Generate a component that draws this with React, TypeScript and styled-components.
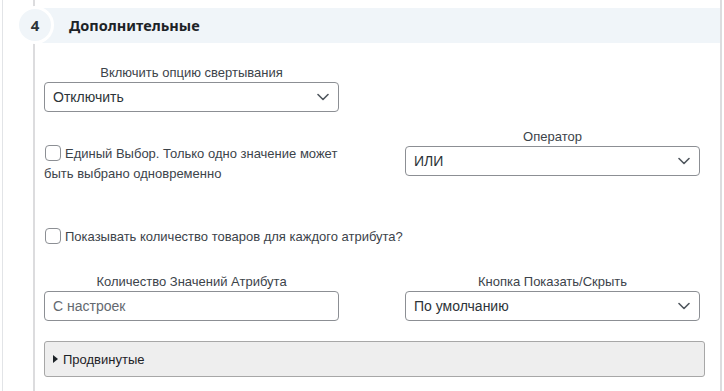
import React from "react";
import styled, { createGlobalStyle } from "styled-components";

const Global = createGlobalStyle`
  html, body { margin: 0; padding: 0; background: #fff; }
  body { font-family: "Liberation Sans", Arial, sans-serif; color: #2c3338; }
  * { box-sizing: border-box; }
`;

const Frame = styled.div`
  width: 724px;
  height: 391px;
  overflow: hidden;
  padding-left: 2px;
  background: #fff;
`;

const Panel = styled.div`
  width: 720px;
  height: 391px;
  border-left: 1px solid #e2e4e7;
  border-right: 2px solid #dcdcde;
`;

const Section = styled.div`
  margin-left: 30px;
  height: 100%;
  border-left: 2px solid #dcdcde;
  padding-top: 6px;
`;

const HeaderRow = styled.div`
  display: flex;
  align-items: center;
  margin-left: -19px;
  height: 38px;
`;

const StepCircle = styled.div`
  position: relative;
  z-index: 1;
  width: 38px;
  height: 38px;
  flex: none;
  border-radius: 50%;
  background: #f0f5f9;
  border: 3px solid #fff;
  display: flex;
  align-items: center;
  justify-content: center;
  font-family: "Noto Sans", sans-serif;
  font-weight: 700;
  font-size: 15px;
  color: #2c3338;
`;

const HeaderBar = styled.div`
  flex: 1;
  margin-left: -14px;
  height: 35px;
  background: #f0f5f9;
  display: flex;
  align-items: center;
  padding-left: 29px;
  font-family: "Noto Sans", sans-serif;
  font-weight: 700;
  font-size: 14.5px;
  color: #1d2327;
`;

const Content = styled.div`
  padding-left: 9px;
  width: 672px;
`;

const Grid = styled.div<{ $top: number }>`
  display: grid;
  grid-template-columns: 295px 295px;
  column-gap: 66px;
  margin-top: ${(p) => p.$top}px;
`;

const Field = styled.div`
  display: flex;
  flex-direction: column;
`;

const Label = styled.div`
  text-align: center;
  font-size: 13px;
  line-height: 18px;
  color: #3c434a;
`;

const Control = styled.div<{ $placeholder?: boolean }>`
  height: 30px;
  border: 1px solid #8c8f94;
  border-radius: 4px;
  display: flex;
  align-items: center;
  justify-content: space-between;
  padding: 0 9px 0 8px;
  font-size: 14px;
  color: ${(p) => (p.$placeholder ? "#646970" : "#2c3338")};
  background: #fff;
`;

const CheckText = styled.div<{ $top: number }>`
  margin-top: ${(p) => p.$top}px;
  font-size: 13px;
  line-height: 20px;
  color: #3c434a;
`;

const Box = styled.span`
  display: inline-block;
  width: 16px;
  height: 16px;
  border: 1px solid #8c8f94;
  border-radius: 4px;
  vertical-align: -3px;
  margin: 0 4px 0 1px;
  background: #fff;
`;

const Details = styled.div`
  margin-top: 20px;
  width: 661px;
  height: 36px;
  background: #eeeeee;
  border: 1px solid #a7a7a7;
  border-radius: 3px;
  display: flex;
  align-items: center;
  padding-left: 8px;
  font-size: 13px;
  color: #1d2327;
`;

const Triangle = styled.span`
  width: 0;
  height: 0;
  border-top: 4px solid transparent;
  border-bottom: 4px solid transparent;
  border-left: 5px solid #1d2327;
  margin-right: 5px;
`;

const Chevron = () => (
  <svg width="12" height="8" viewBox="0 0 12 8" fill="none">
    <path d="M1 1.5 L6 6.5 L11 1.5" stroke="#50575e" strokeWidth="1.6" strokeLinecap="round" strokeLinejoin="round" />
  </svg>
);

export default function App() {
  return (
    <>
      <Global />
      <Frame>
        <Panel>
          <Section>
            <HeaderRow>
              <StepCircle>4</StepCircle>
              <HeaderBar>Дополнительные</HeaderBar>
            </HeaderRow>
            <Content>
              <Grid $top={20}>
                <Field>
                  <Label>Включить опцию свертывания</Label>
                  <Control>
                    Отключить
                    <Chevron />
                  </Control>
                </Field>
              </Grid>
              <Grid $top={16}>
                <CheckText $top={16}>
                  <Box />
                  Единый Выбор. Только одно значение может быть выбрано одновременно
                </CheckText>
                <Field>
                  <Label>Оператор</Label>
                  <Control>
                    ИЛИ
                    <Chevron />
                  </Control>
                </Field>
              </Grid>
              <CheckText $top={43}>
                <Box />
                Показывать количество товаров для каждого атрибута?
              </CheckText>
              <Grid $top={26}>
                <Field>
                  <Label>Количество Значений Атрибута</Label>
                  <Control $placeholder>С настроек</Control>
                </Field>
                <Field>
                  <Label>Кнопка Показать/Скрыть</Label>
                  <Control>
                    По умолчанию
                    <Chevron />
                  </Control>
                </Field>
              </Grid>
              <Details>
                <Triangle />
                Продвинутые
              </Details>
            </Content>
          </Section>
        </Panel>
      </Frame>
    </>
  );
}
